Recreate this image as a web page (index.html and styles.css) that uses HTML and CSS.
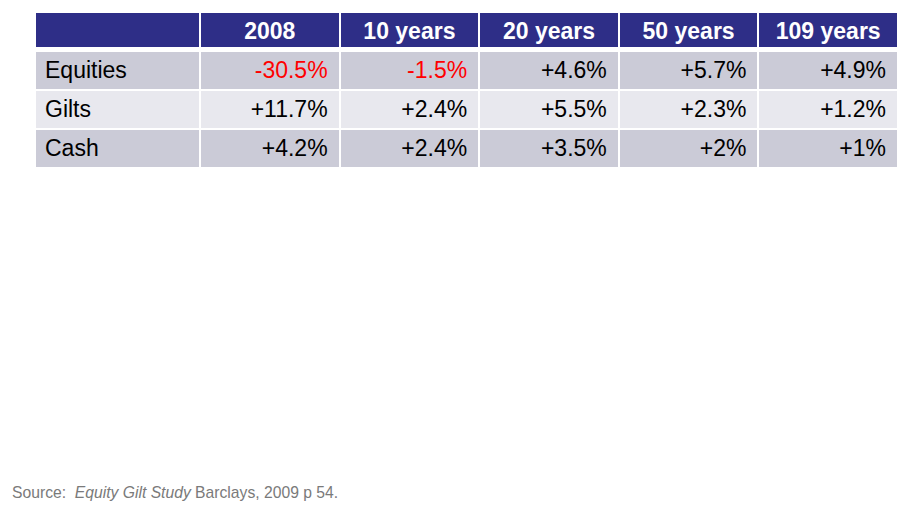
FILE: index.html
```html
<!DOCTYPE html>
<html>
<head>
<meta charset="utf-8">
<link rel="stylesheet" href="styles.css">
</head>
<body>
<div class="slide">
  <div class="grid">
    <div class="hd"></div>
    <div class="hd">2008</div>
    <div class="hd">10 years</div>
    <div class="hd">20 years</div>
    <div class="hd">50 years</div>
    <div class="hd">109 years</div>

    <div class="c lbl dark">Equities</div>
    <div class="c dark neg">-30.5%</div>
    <div class="c dark neg">-1.5%</div>
    <div class="c dark">+4.6%</div>
    <div class="c dark">+5.7%</div>
    <div class="c dark">+4.9%</div>

    <div class="c lbl light">Gilts</div>
    <div class="c light">+11.7%</div>
    <div class="c light">+2.4%</div>
    <div class="c light">+5.5%</div>
    <div class="c light">+2.3%</div>
    <div class="c light">+1.2%</div>

    <div class="c lbl dark">Cash</div>
    <div class="c dark">+4.2%</div>
    <div class="c dark">+2.4%</div>
    <div class="c dark">+3.5%</div>
    <div class="c dark">+2%</div>
    <div class="c dark">+1%</div>
  </div>
  <div class="spacer"></div>
  <p class="source">Source:&nbsp; <i>Equity Gilt Study</i> Barclays, 2009 p 54.</p>
</div>
</body>
</html>
```

FILE: styles.css
```css
html, body {
  margin: 0;
  padding: 0;
  background: #ffffff;
}
.slide {
  width: 908px;
  height: 506px;
  display: flex;
  flex-direction: column;
  font-family: "Liberation Sans", Arial, sans-serif;
}
.grid {
  margin: 13px 0 0 36px;
  width: 861px;
  display: grid;
  grid-template-columns: 163px repeat(5, 1fr);
  grid-template-rows: 37px 37px 37px 37px;
  column-gap: 2px;
  row-gap: 2px;
}
.hd {
  align-self: start;
  box-sizing: border-box;
  height: 34px;
  padding-top: 2px;
  background: #2e2e87;
  color: #ffffff;
  font-weight: bold;
  font-size: 23px;
  display: flex;
  align-items: center;
  justify-content: center;
}
.c {
  font-size: 23px;
  color: #000000;
  display: flex;
  align-items: center;
  justify-content: flex-end;
  padding: 0 11px 0 9px;
}
.lbl {
  justify-content: flex-start;
}
.dark { background: #cbcbd7; }
.light { background: #e8e8ee; }
.neg { color: #ff0000; }
.spacer { flex: 1; }
.source {
  margin: 0 0 4px 12px;
  font-size: 15.7px;
  color: #7a7a7a;
}
```
